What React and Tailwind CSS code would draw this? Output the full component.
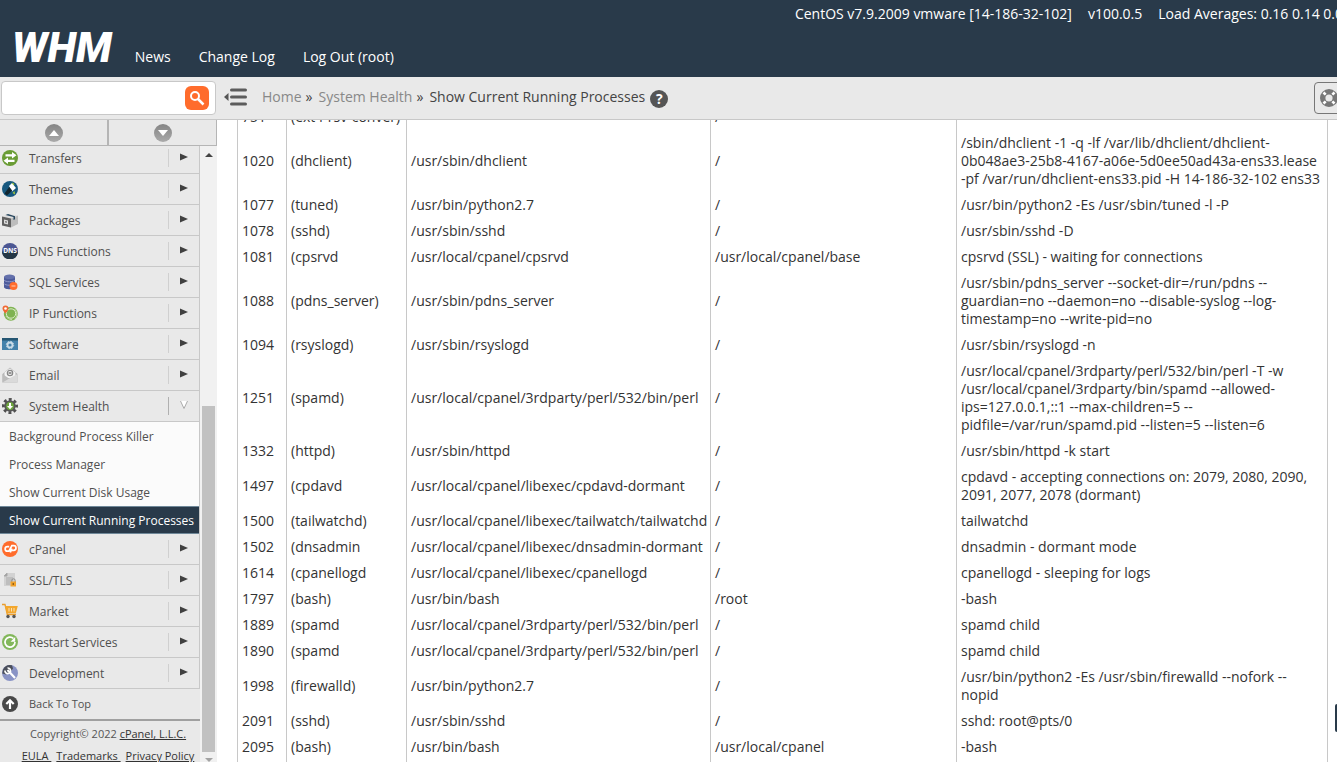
import { useState } from 'react';

const ICONS = {
  transfers: (
    <>
      <circle cx="8" cy="8" r="8" fill="#6a9c35" />
      <path d="M10 2l4.500 3.300L10 8.500V6.500H3.500V4.200H10zM6 7.500L1.500 10.800 6 14v-2h6.500V9.700H6z" fill="#fff" />
    </>
  ),
  themes: (
    <>
      <circle cx="8" cy="8" r="8" fill="#17587f" />
      <path d="M7 5l3-3 4 5-4 3.500z" fill="#fff" />
      <path d="M7.200 6l3 3.500L5 14.500l-2.500-2z" fill="#12262f" />
      <path d="M10.500 12l2-2 .6 3.500z" fill="#a5c83b" />
      <path d="M10.500 1.800l1.500 2" stroke="#a5c83b" strokeWidth="1.200" />
    </>
  ),
  packages: (
    <>
      <path d="M0 4.500L7 2l9 1.500-7 3.500z" fill="#dedede" />
      <path d="M0 4.500l9 2V15.500l-9-2z" fill="#606060" />
      <path d="M9 6.500l7-3v8.500l-7 3.500z" fill="#bdbdbd" />
      <path d="M3.500 3l8 2v3l1.500-.7V4.300L6 2z" fill="#24445c" />
      <path d="M2 7.500l4 1v4l-4-1z" fill="#ddd" />
      <path d="M3.300 9l1.500.4v1.400l-1.500-.4z" fill="#555" />
    </>
  ),
  dns: (
    <>
      <circle cx="8" cy="8" r="8" fill="#4c5793" />
      <path d="M0 8.500h16A8 8 0 0 1 0 8.500z" fill="#253746" />
      <text x="8" y="10.300" textAnchor="middle" fontSize="6.500" fontWeight="700" fill="#fff" fontFamily="Open Sans, sans-serif">DNS</text>
    </>
  ),
  sql: (
    <>
      <path d="M2 3v10c0 3 11 3 11 0V3z" fill="#4d5b9b" />
      <ellipse cx="7.500" cy="2.800" rx="5.500" ry="2.300" fill="#6470ab" />
      <path d="M2 6c1 2.300 10 2.300 11 0M2 9.500c1 2.300 10 2.300 11 0" fill="none" stroke="#8d96c6" />
      <circle cx="11.500" cy="12" r="4" fill="#ff6c2c" />
      <path d="M9.500 12h4" stroke="#ffb896" strokeWidth="1.300" />
    </>
  ),
  ip: (
    <>
      <circle cx="8.800" cy="8.800" r="7" fill="#7fb352" />
      <circle cx="9" cy="8.500" r="4.700" fill="none" stroke="#dcecca" />
      <path d="M12.500 4c3 3 3 7 .5 10M4 11c1 2 3 3.500 6 3.500" fill="none" stroke="#c5deaa" />
      <path d="M3.500 8.500C1.500 6 .5 5 .5 3.500a3 3 0 0 1 6 0c0 1.500-1 2.500-3 5z" fill="#f06a35" />
      <circle cx="3.500" cy="3.500" r="1.300" fill="#fff" />
    </>
  ),
  software: (
    <>
      <rect y="2" width="16" height="12" fill="#4482ab" />
      <rect y="2" width="16" height="2.500" fill="#255673" />
      <circle cx="8" cy="9" r="2.500" fill="none" stroke="#c8dbe7" strokeWidth="1.800" />
      <circle cx="8" cy="9" r="3.700" fill="none" stroke="#c8dbe7" strokeDasharray="1.500 1.400" />
    </>
  ),
  email: (
    <>
      <path d="M.5 7L8 .5 15.500 7v8.500H.5z" fill="#b5b5b5" />
      <path d="M2.500 5.500L8 1.500l5.500 4V11h-11z" fill="#f5f5f5" />
      <circle cx="8" cy="6" r="2.700" fill="none" stroke="#888" strokeWidth="1.200" />
      <path d="M6.500 6h3" stroke="#777" strokeWidth="1.500" />
      <path d="M.5 7L7 11.500l-6.500 4z" fill="#bcbcbc" />
      <path d="M15.500 7L8 11 .5 15.500h15z" fill="#dadada" />
    </>
  ),
  health: (
    <>
      <circle cx="8" cy="8" r="6.600" fill="none" stroke="#505050" strokeWidth="2.800" strokeDasharray="2.900 2.284" strokeDashoffset="1.450" />
      <circle cx="8" cy="8" r="5.800" fill="#555" />
      <circle cx="8" cy="8" r="3.900" fill="#6da53e" />
      <path d="M7 5h2v3h2l-3 3.300L5 8h2z" fill="#fff" />
    </>
  ),
  cpanel: (
    <>
      <circle cx="8" cy="8" r="8" fill="#ff6c2c" />
      <path d="M7.200 5.700H5.400a2.200 2.200 0 0 0 0 4.500h1.500l3-5.500h1.800a2.200 2.200 0 0 1 0 4.600H9.300M8.300 11.500l1.500-4" fill="none" stroke="#fff" strokeWidth="1.700" />
    </>
  ),
  ssl: (
    <>
      <path d="M5 1h8v13H2V4z" fill="#d2d2d2" />
      <path d="M5 1v3H2zM4 6h7M4 8h7M4 10h5M4 12h4" fill="#999" stroke="#aaa" />
      <path d="M9.800 10V8.500a1.700 1.700 0 0 1 3.400 0V10" fill="none" stroke="#8b8b8b" />
      <rect x="8.500" y="9.500" width="5.500" height="5" fill="#f1a22b" />
      <rect x="10.700" y="11" width="1" height="2" fill="#694715" />
    </>
  ),
  market: (
    <>
      <path d="M0 1.500h3l2.300 10H14" fill="none" stroke="#e99d2e" strokeWidth="1.300" />
      <path d="M3 3h12.800l-2 7.300H4.800z" fill="#f3a72d" />
      <path d="M7 5v3.500M9.500 5v3.500M12 5v3.500" stroke="#fbe1b5" />
      <circle cx="6" cy="13.500" r="1.700" fill="#555" />
      <circle cx="12" cy="13.500" r="1.700" fill="#555" />
    </>
  ),
  restart: (
    <>
      <circle cx="8" cy="8" r="8" fill="#82b75a" />
      <path d="M11.500 4.500A5 5 0 1 0 13 8" fill="none" stroke="#fff" strokeWidth="1.700" />
      <path d="M13.200 3v4.700H8.500z" fill="#fff" />
    </>
  ),
  development: (
    <>
      <circle cx="8" cy="8" r="8" fill="#8993c5" />
      <path d="M1 4.500A8 8 0 0 1 10 .3l1 3.200-3 4-4 2-3.700-1z" fill="#4b4f5a" />
      <path d="M5.500 5l7.500 8" stroke="#fff" strokeWidth="2.200" />
      <path d="M3 5.500A2.800 2.800 0 1 0 5.500 3" fill="none" stroke="#fff" strokeWidth="1.700" />
    </>
  ),
  top: (
    <>
      <circle cx="8" cy="8" r="8" fill="#484848" />
      <path d="M8 13V4.500M4.300 8L8 4.300 11.700 8" fill="none" stroke="#fff" strokeWidth="2.200" />
    </>
  ),
};

const beforeItems = [
  { label: 'Transfers', icon: 'transfers' },
  { label: 'Themes', icon: 'themes' },
  { label: 'Packages', icon: 'packages' },
  { label: 'DNS Functions', icon: 'dns' },
  { label: 'SQL Services', icon: 'sql' },
  { label: 'IP Functions', icon: 'ip' },
  { label: 'Software', icon: 'software' },
  { label: 'Email', icon: 'email' },
  { label: 'System Health', icon: 'health', open: true },
];

const afterItems = [
  { label: 'cPanel', icon: 'cpanel' },
  { label: 'SSL/TLS', icon: 'ssl' },
  { label: 'Market', icon: 'market' },
  { label: 'Restart Services', icon: 'restart' },
  { label: 'Development', icon: 'development' },
];

const subItems = ['Background Process Killer', 'Process Manager', 'Show Current Disk Usage'];

const processes = [
  ['751', '(ext4-rsv-conver)', '', '/', ''],
  ['1020', '(dhclient)', '/usr/sbin/dhclient', '/', '/sbin/dhclient -1 -q -lf /var/lib/dhclient/dhclient-0b048ae3-25b8-4167-a06e-5d0ee50ad43a-ens33.lease -pf /var/run/dhclient-ens33.pid -H 14-186-32-102 ens33'],
  ['1077', '(tuned)', '/usr/bin/python2.7', '/', '/usr/bin/python2 -Es /usr/sbin/tuned -l -P'],
  ['1078', '(sshd)', '/usr/sbin/sshd', '/', '/usr/sbin/sshd -D'],
  ['1081', '(cpsrvd', '/usr/local/cpanel/cpsrvd', '/usr/local/cpanel/base', 'cpsrvd (SSL) - waiting for connections'],
  ['1088', '(pdns_server)', '/usr/sbin/pdns_server', '/', '/usr/sbin/pdns_server --socket-dir=/run/pdns --guardian=no --daemon=no --disable-syslog --log-timestamp=no --write-pid=no'],
  ['1094', '(rsyslogd)', '/usr/sbin/rsyslogd', '/', '/usr/sbin/rsyslogd -n'],
  ['1251', '(spamd)', '/usr/local/cpanel/3rdparty/perl/532/bin/perl', '/', '/usr/local/cpanel/3rdparty/perl/532/bin/perl -T -w /usr/local/cpanel/3rdparty/bin/spamd --allowed-ips=127.0.0.1,::1 --max-children=5 --pidfile=/var/run/spamd.pid --listen=5 --listen=6'],
  ['1332', '(httpd)', '/usr/sbin/httpd', '/', '/usr/sbin/httpd -k start'],
  ['1497', '(cpdavd', '/usr/local/cpanel/libexec/cpdavd-dormant', '/', 'cpdavd - accepting connections on: 2079, 2080, 2090, 2091, 2077, 2078 (dormant)'],
  ['1500', '(tailwatchd)', '/usr/local/cpanel/libexec/tailwatch/tailwatchd', '/', 'tailwatchd'],
  ['1502', '(dnsadmin', '/usr/local/cpanel/libexec/dnsadmin-dormant', '/', 'dnsadmin - dormant mode'],
  ['1614', '(cpanellogd', '/usr/local/cpanel/libexec/cpanellogd', '/', 'cpanellogd - sleeping for logs'],
  ['1797', '(bash)', '/usr/bin/bash', '/root', '-bash'],
  ['1889', '(spamd', '/usr/local/cpanel/3rdparty/perl/532/bin/perl', '/', 'spamd child'],
  ['1890', '(spamd', '/usr/local/cpanel/3rdparty/perl/532/bin/perl', '/', 'spamd child'],
  ['1998', '(firewalld)', '/usr/bin/python2.7', '/', '/usr/bin/python2 -Es /usr/sbin/firewalld --nofork --nopid'],
  ['2091', '(sshd)', '/usr/sbin/sshd', '/', 'sshd: root@pts/0'],
  ['2095', '(bash)', '/usr/bin/bash', '/usr/local/cpanel', '-bash'],
];

function Icon({ name }) {
  return (
    <svg viewBox="0 0 16 16" className="w-4 h-4 shrink-0" aria-hidden="true">
      {ICONS[name]}
    </svg>
  );
}

function NavItem({ item }) {
  return (
    <li className="flex items-center h-[31px] border-b border-r border-[#c8c8c8] pl-0.5">
      <a href="#" className="flex flex-1 items-center gap-[11px]">
        <Icon name={item.icon} />
        <span className="pt-0.5">{item.label}</span>
      </a>
      <button
        type="button"
        aria-label={`Toggle ${item.label}`}
        className={`flex items-center h-[18px] w-[31px] pl-[11px] pb-0.5 border-l ${item.open ? 'border-[#b0b0b0]' : 'border-[#d0d0d0]'}`}
      >
        <svg viewBox="0 0 8 8" className="w-2 h-2">
          {item.open
            ? <path d="M.5 0L4 7.500 7.500 0" fill="#fff" stroke="#aaa" />
            : <path d="M0 .5L8 4 0 7.500z" fill="#404040" />}
        </svg>
      </button>
    </li>
  );
}

function ScrollButton({ label, children }) {
  return (
    <button type="button" aria-label={label} className="flex flex-1 items-center justify-center">
      <span className="flex items-center justify-center w-[18px] h-[18px] rounded-full bg-linear-to-b from-[#858585] to-[#aaa]">
        <svg viewBox="0 0 10 6" className="w-2.5 h-1.5">{children}</svg>
      </span>
    </button>
  );
}

function Sidebar() {
  return (
    <aside className="flex flex-col w-[217px] shrink-0 bg-[#e9e9e9]">
      <div className="flex h-[26px] shrink-0 border-b border-r border-[#b5b5b5] divide-x-2 divide-[#b5b5b5]">
        <ScrollButton label="Collapse all"><path d="M5 0l5 6H0z" fill="#fff" /></ScrollButton>
        <ScrollButton label="Expand all"><path d="M5 6l5-6H0z" fill="#fff" /></ScrollButton>
      </div>
      <div className="flex flex-1 min-h-0">
        <div className="flex-1 overflow-hidden">
          <nav className="-mt-[3px] text-xs text-[#505050]">
            <ul>
              {beforeItems.map((item) => <NavItem key={item.label} item={item} />)}
            </ul>
            <ul className="bg-[#fbfbfb] border-r border-[#c8c8c8]">
              {subItems.map((label) => (
                <li key={label} className="flex items-center h-7 pt-0.5 pl-[9px]">
                  <a href="#">{label}</a>
                </li>
              ))}
              <li className="flex items-center h-7 pt-0.5 pl-[9px] bg-[#293a4a] border-y border-[#6f8899] text-white">
                <a href="#" aria-current="page" className="whitespace-nowrap">Show Current Running Processes</a>
              </li>
            </ul>
            <ul>
              {afterItems.map((item) => <NavItem key={item.label} item={item} />)}
            </ul>
            <a href="#" className="flex items-center gap-[11px] h-8 pl-0.5 border-b-2 border-[#a0a0a0] text-[11px]">
              <Icon name="top" />
              Back To Top
            </a>
          </nav>
          <footer className="pt-0.5 pl-4 text-center text-[11px] leading-[22px] text-[#555] whitespace-nowrap">
            <p>Copyright© 2022 <a href="#" className="underline text-[#333]">cPanel, L.L.C.</a></p>
            <p className="flex justify-center gap-[5px] text-[#333]">
              <a href="#" className="underline whitespace-pre">EULA </a>
              <a href="#" className="underline whitespace-pre">Trademarks </a>
              <a href="#" className="underline">Privacy Policy</a>
            </p>
          </footer>
        </div>
        <div className="flex flex-col items-center w-[17px] bg-[#f1f1f1]">
          <svg viewBox="0 0 8 4" className="w-2 h-1 mt-[7px] shrink-0"><path d="M4 0l4 4H0z" fill="#444" /></svg>
          <div className="basis-[249px] shrink-0" />
          <div className="w-[13px] flex-1 bg-[#c1c1c1]" />
          <svg viewBox="0 0 8 4" className="w-2 h-1 mt-1.5 shrink-0"><path d="M0 0h8L4 4z" fill="#a3a3a3" /></svg>
        </div>
      </div>
    </aside>
  );
}

function Header() {
  return (
    <header className="flex flex-col h-[77px] shrink-0 bg-[#293a4a] text-sm text-white overflow-hidden">
      <div className="flex justify-end gap-4 h-7 items-center -mr-3.5 whitespace-nowrap">
        <span>CentOS v7.9.2009 vmware [14-186-32-102]</span>
        <span>v100.0.5</span>
        <span>Load Averages: 0.16 0.14 0.05</span>
      </div>
      <div className="flex items-end pl-3">
        <a href="#" className="font-[Roboto,sans-serif] font-black italic text-[42px] leading-[39px]">WHM</a>
        <nav className="flex gap-7 pl-[23px]">
          <a href="#">News</a>
          <a href="#">Change Log</a>
          <a href="#">Log Out (root)</a>
        </nav>
      </div>
    </header>
  );
}

function Toolbar() {
  const [query, setQuery] = useState('');
  return (
    <div className="flex items-center h-[43px] shrink-0 bg-[#e9e9e9] border-b border-[#c8c8c8] pl-px overflow-hidden">
      <form className="flex items-center w-[215px] h-[34px] shrink-0 bg-white border border-[#c8c8c8] rounded pr-1.5">
        <input
          type="text"
          aria-label="Search"
          value={query}
          onChange={(e) => setQuery(e.target.value)}
          className="flex-1 min-w-0 h-full px-2 text-sm outline-none"
        />
        <button type="button" aria-label="Search" className="flex items-center justify-center w-6 h-6 rounded-md bg-[#ff6c2c]">
          <svg viewBox="0 0 16 16" className="w-4 h-4">
            <circle cx="6" cy="6" r="4" fill="none" stroke="#fff" strokeWidth="2" />
            <path d="M9 9l5.500 5.500" stroke="#fff" strokeWidth="2.500" />
          </svg>
        </button>
      </form>
      <button type="button" aria-label="Toggle menu" className="ml-2 pb-0.5 shrink-0">
        <svg viewBox="0 0 23 18" className="w-[23px] h-[18px]">
          <path d="M4.500 5v8L0 9z" fill="#555" />
          <path d="M7.500 2h14M7.500 9h14M7.500 16h14" stroke="#5c5c5c" strokeWidth="3" strokeLinecap="round" />
        </svg>
      </button>
      <nav className="flex items-center pl-[15px] pb-0.5 text-sm text-[#444] whitespace-nowrap">
        <a href="#" className="text-[#888]">Home</a>
        <span className="pl-1 pr-1.5">»</span>
        <a href="#" className="text-[#888]">System Health</a>
        <span className="pl-1 pr-1.5">»</span>
        <span>Show Current Running Processes</span>
        <button type="button" aria-label="Help" className="flex items-center justify-center ml-[5px] mt-1 w-[18px] h-[18px] rounded-full bg-[#555] text-white font-bold text-sm leading-none">?</button>
      </nav>
      <button type="button" aria-label="Support" className="flex items-center justify-center ml-auto -mr-2.5 w-[33px] h-8 pr-1 shrink-0 border border-[#777] rounded">
        <svg viewBox="0 0 18 18" className="w-[18px] h-[18px]">
          <circle cx="9" cy="9" r="6.300" fill="none" stroke="#777" strokeWidth="5.400" />
          <path d="M3.500 3.500l2.200 2.200M14.500 3.500l-2.200 2.200M3.500 14.500l2.200-2.200M14.500 14.500l-2.200-2.200" stroke="#fff" strokeWidth="2.600" />
        </svg>
      </button>
    </div>
  );
}

function ProcessTable() {
  return (
    <main className="flex-1 min-w-0 overflow-hidden pl-5 pr-[9px]">
      <table className="-mt-4 w-full table-fixed border-collapse border-x border-[#c8c8c8] text-sm leading-[18px] text-[#333]">
        <colgroup>
          <col className="w-[49px]" />
          <col className="w-[120px]" />
          <col className="w-[304px]" />
          <col className="w-[246px]" />
          <col />
        </colgroup>
        <tbody>
          {processes.map((row) => (
            <tr key={row[0]} className="h-[26px]">
              {row.map((cell, i) => (
                <td key={i} className="border-x border-[#c8c8c8] p-1 align-middle">{cell}</td>
              ))}
            </tr>
          ))}
          <tr className="h-[26px]">
            {[0, 1, 2, 3, 4].map((i) => <td key={i} className="border-x border-[#c8c8c8]" />)}
          </tr>
        </tbody>
      </table>
    </main>
  );
}

export default function App() {
  return (
    <div className="relative flex flex-col h-screen overflow-hidden bg-white font-['Open_Sans',sans-serif]">
      <Header />
      <Toolbar />
      <div className="flex flex-1 min-h-0">
        <Sidebar />
        <ProcessTable />
      </div>
      <button type="button" aria-label="Feedback" className="absolute right-0 bottom-[30px] w-0.5 h-7 rounded-l bg-[#293a4a]" />
    </div>
  );
}
